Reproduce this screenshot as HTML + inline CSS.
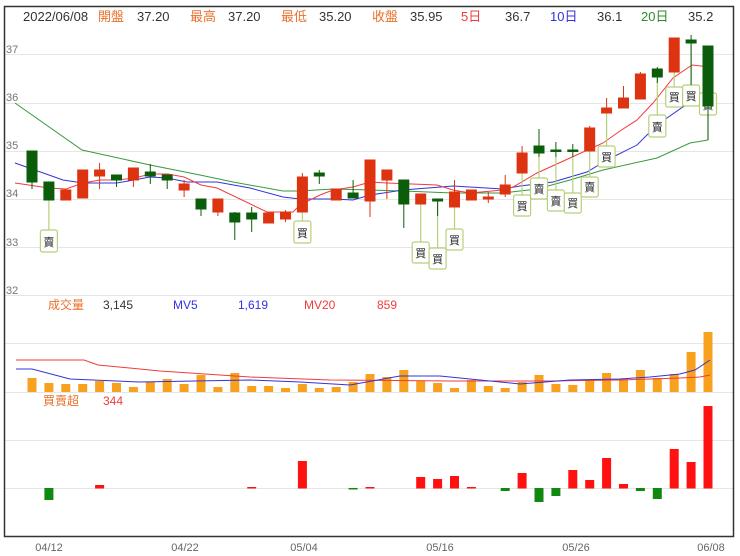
<!DOCTYPE html>
<html><head><meta charset="utf-8"><style>
html,body{margin:0;padding:0;background:#fff;}
svg{display:block;font-family:"Liberation Sans","Noto Sans CJK TC",sans-serif;}
</style></head><body>
<svg width="740" height="556" viewBox="0 0 740 556" xmlns="http://www.w3.org/2000/svg">
<rect x="0" y="0" width="740" height="556" fill="#fff"/>
<g stroke="#e6e6e6" stroke-width="1">
<line x1="5" y1="54.5" x2="733" y2="54.5"/><line x1="5" y1="103.5" x2="733" y2="103.5"/>
<line x1="5" y1="151.5" x2="733" y2="151.5"/><line x1="5" y1="199.5" x2="733" y2="199.5"/>
<line x1="5" y1="247.5" x2="733" y2="247.5"/><line x1="5" y1="295.5" x2="733" y2="295.5"/>
<line x1="5" y1="343.5" x2="733" y2="343.5"/><line x1="5" y1="392.5" x2="733" y2="392.5"/>
<line x1="5" y1="440.5" x2="733" y2="440.5"/><line x1="5" y1="488.5" x2="733" y2="488.5"/>
</g>
<rect x="4.5" y="6.5" width="729" height="530" fill="none" stroke="#333" stroke-width="1.5"/>
<g font-size="13">
<text x="23" y="21" fill="#333">2022/06/08</text>
<text x="98" y="21" fill="#e8702a">開盤</text><text x="137" y="21" fill="#333">37.20</text>
<text x="190" y="21" fill="#e8702a">最高</text><text x="228" y="21" fill="#333">37.20</text>
<text x="281" y="21" fill="#e8702a">最低</text><text x="319" y="21" fill="#333">35.20</text>
<text x="372" y="21" fill="#e8702a">收盤</text><text x="410" y="21" fill="#333">35.95</text>
<text x="461" y="21" fill="#f03c3c">5日</text><text x="505" y="21" fill="#333">36.7</text>
<text x="550" y="21" fill="#3333dd">10日</text><text x="597" y="21" fill="#333">36.1</text>
<text x="641" y="21" fill="#2e8b2e">20日</text><text x="688" y="21" fill="#333">35.2</text>
</g>
<g font-size="11" fill="#777">
<text x="6" y="53">37</text><text x="6" y="101">36</text><text x="6" y="149">35</text>
<text x="6" y="197">34</text><text x="6" y="246">33</text><text x="6" y="294">32</text>
</g>
<!-- MA lines -->
<polyline fill="none" stroke="#3a9a3a" stroke-width="1" points="15,103 82,150 150,165 200,175 233,182 283,191 300,191 333,189 370,190 403,191 453,193 503,193 537,189 570,180 603,170 657,158 690,143 708,140"/>
<polyline fill="none" stroke="#3333dd" stroke-width="1" points="15,163 63,180 83,183 117,183 150,177 167,178 187,182 217,182 250,188 283,197 300,199 333,199 353,200 370,195 403,190 453,186 503,189 520,186 553,182 587,172 607,160 637,145 657,125 690,102 708,98"/>
<polyline fill="none" stroke="#f03c3c" stroke-width="1" points="15,183 49,188 66,189 83,183 100,180 117,180 134,178 151,174 168,174 184,177 201,185 217,188 267,212 293,212 300,205 320,195 333,190 353,187 370,182 387,183 437,185 453,190 470,193 503,190 513,187 537,173 570,158 603,143 620,131 637,120 653,103 673,78 692,65 710,67"/>
<!-- markers -->
<g stroke="#b5d17a" stroke-width="1.2" fill="#fff">
<line x1="48.9" y1="200" x2="48.9" y2="230"/><rect x="40.4" y="230" width="17" height="22" rx="2"/>
<line x1="302.4" y1="212" x2="302.4" y2="221"/><rect x="293.9" y="221" width="17" height="22" rx="2"/>
<line x1="420.7" y1="204" x2="420.7" y2="242"/><rect x="412.2" y="242" width="17" height="21" rx="2"/>
<line x1="437.6" y1="201" x2="437.6" y2="248"/><rect x="429.1" y="248" width="17" height="21" rx="2"/>
<line x1="454.5" y1="207" x2="454.5" y2="229"/><rect x="446" y="229" width="17" height="21" rx="2"/>
<line x1="522.1" y1="173" x2="522.1" y2="195"/><rect x="513.6" y="195" width="17" height="21" rx="2"/>
<line x1="539" y1="157" x2="539" y2="178"/><rect x="530.5" y="178" width="17" height="21" rx="2"/>
<line x1="555.9" y1="157" x2="555.9" y2="190"/><rect x="547.4" y="190" width="17" height="21" rx="2"/>
<line x1="572.8" y1="157" x2="572.8" y2="193"/><rect x="564.3" y="193" width="17" height="20" rx="2"/>
<line x1="589.7" y1="151" x2="589.7" y2="177"/><rect x="581.2" y="177" width="17" height="20" rx="2"/>
<line x1="606.6" y1="113" x2="606.6" y2="146"/><rect x="598.1" y="146" width="17" height="21" rx="2"/>
<line x1="657.3" y1="77" x2="657.3" y2="115"/><rect x="648.8" y="115" width="17" height="22" rx="2"/>
<line x1="674.2" y1="72" x2="674.2" y2="87"/><rect x="665.7" y="87" width="17" height="20" rx="2"/>
<line x1="691.1" y1="43" x2="691.1" y2="85"/><rect x="682.6" y="85" width="17" height="21" rx="2"/>
<line x1="708" y1="106" x2="708" y2="140"/><rect x="699.5" y="93" width="17" height="22" rx="2"/>
</g>
<g font-size="11" fill="#222" text-anchor="middle">
<text x="48.9" y="246">賣</text><text x="302.4" y="237">買</text>
<text x="420.7" y="257">買</text><text x="437.6" y="263">買</text><text x="454.5" y="244">買</text>
<text x="522.1" y="210">買</text><text x="539" y="193">賣</text><text x="555.9" y="205">賣</text>
<text x="572.8" y="207">買</text><text x="589.7" y="191">賣</text><text x="606.6" y="161">買</text>
<text x="657.3" y="131">賣</text><text x="674.2" y="101">買</text><text x="691.1" y="100">買</text>
<text x="708" y="109">賣</text>
</g>
<!-- candles -->
<g stroke-width="1">
<g stroke="#0b5d0b" fill="#0b5d0b">
<line x1="32" y1="151" x2="32" y2="189"/><rect x="27" y="151" width="10" height="31"/>
<line x1="48.9" y1="182" x2="48.9" y2="200"/><rect x="43.9" y="182" width="10" height="18"/>
<line x1="116.5" y1="175" x2="116.5" y2="187"/><rect x="111.5" y="175" width="10" height="5"/>
<line x1="150.3" y1="164" x2="150.3" y2="184"/><rect x="145.3" y="172" width="10" height="4"/>
<line x1="167.2" y1="175" x2="167.2" y2="189"/><rect x="162.2" y="175" width="10" height="5"/>
<line x1="201" y1="199" x2="201" y2="216"/><rect x="196" y="199" width="10" height="10"/>
<line x1="234.8" y1="212" x2="234.8" y2="240"/><rect x="229.8" y="213" width="10" height="9"/>
<line x1="251.7" y1="207" x2="251.7" y2="232"/><rect x="246.7" y="213" width="10" height="6"/>
<line x1="319.3" y1="170" x2="319.3" y2="184"/><rect x="314.3" y="173" width="10" height="3"/>
<line x1="353.1" y1="180" x2="353.1" y2="198"/><rect x="348.1" y="193" width="10" height="5"/>
<line x1="403.8" y1="180" x2="403.8" y2="228"/><rect x="398.8" y="180" width="10" height="24"/>
<line x1="437.6" y1="199" x2="437.6" y2="216"/><rect x="432.6" y="199" width="10" height="2"/>
<line x1="539" y1="129" x2="539" y2="157"/><rect x="534" y="146" width="10" height="7"/>
<line x1="555.9" y1="142" x2="555.9" y2="157"/><rect x="550.9" y="150" width="10" height="1.5"/>
<line x1="572.8" y1="144" x2="572.8" y2="157"/><rect x="567.8" y="150" width="10" height="1.5"/>
<line x1="657.3" y1="67" x2="657.3" y2="83"/><rect x="652.3" y="69" width="10" height="8"/>
<line x1="691.1" y1="35" x2="691.1" y2="85"/><rect x="686.1" y="40" width="10" height="3"/>
<line x1="708" y1="46" x2="708" y2="140"/><rect x="703" y="46" width="10" height="60"/>
</g>
<g stroke="#dd3311" fill="#dd3311">
<rect x="60.8" y="190" width="10" height="10"/>
<rect x="77.7" y="170" width="10" height="28"/>
<line x1="99.6" y1="163" x2="99.6" y2="189"/><rect x="94.6" y="170" width="10" height="6"/>
<line x1="133.4" y1="168" x2="133.4" y2="187"/><rect x="128.4" y="168" width="10" height="12"/>
<line x1="184.1" y1="180" x2="184.1" y2="197"/><rect x="179.1" y="184" width="10" height="6"/>
<line x1="217.9" y1="199" x2="217.9" y2="216"/><rect x="212.9" y="199" width="10" height="13"/>
<rect x="263.6" y="213" width="10" height="10"/>
<line x1="285.5" y1="210" x2="285.5" y2="222"/><rect x="280.5" y="212" width="10" height="7"/>
<line x1="302.4" y1="173" x2="302.4" y2="212"/><rect x="297.4" y="177" width="10" height="35"/>
<rect x="331.2" y="189" width="10" height="11"/>
<line x1="370" y1="160" x2="370" y2="217"/><rect x="365" y="160" width="10" height="41"/>
<line x1="386.9" y1="170" x2="386.9" y2="199"/><rect x="381.9" y="170" width="10" height="10"/>
<rect x="415.7" y="194" width="10" height="10"/>
<line x1="454.5" y1="180" x2="454.5" y2="207"/><rect x="449.5" y="192" width="10" height="15"/>
<rect x="466.4" y="190" width="10" height="10"/>
<line x1="488.3" y1="192" x2="488.3" y2="203"/><rect x="483.3" y="197" width="10" height="2"/>
<line x1="505.2" y1="175" x2="505.2" y2="197"/><rect x="500.2" y="185" width="10" height="9"/>
<line x1="522.1" y1="146" x2="522.1" y2="173"/><rect x="517.1" y="153" width="10" height="20"/>
<line x1="589.7" y1="126" x2="589.7" y2="151"/><rect x="584.7" y="128" width="10" height="23"/>
<line x1="606.6" y1="98" x2="606.6" y2="113"/><rect x="601.6" y="108" width="10" height="5"/>
<line x1="623.5" y1="86" x2="623.5" y2="108"/><rect x="618.5" y="98" width="10" height="10"/>
<line x1="640.4" y1="72" x2="640.4" y2="99"/><rect x="635.4" y="74" width="10" height="25"/>
<rect x="669.2" y="38" width="10" height="34"/>
</g>
</g>
<!-- volume legend -->
<g font-size="12">
<text x="48" y="309" fill="#e8702a">成交量</text><text x="103" y="309" fill="#333">3,145</text>
<text x="173" y="309" fill="#3333dd">MV5</text><text x="238" y="309" fill="#3333dd">1,619</text>
<text x="304" y="309" fill="#f03c3c">MV20</text><text x="377" y="309" fill="#f03c3c">859</text>
<text x="43" y="405" fill="#e8702a">買賣超</text><text x="103" y="405" fill="#f03c3c">344</text>
</g>
<!-- volume bars -->
<g fill="#f8a11e">
<rect x="27.5" y="378" width="9" height="14"/><rect x="44.4" y="383" width="9" height="9"/>
<rect x="61.3" y="384" width="9" height="8"/><rect x="78.2" y="384" width="9" height="8"/>
<rect x="95.1" y="381" width="9" height="11"/><rect x="112" y="383" width="9" height="9"/>
<rect x="128.9" y="387" width="9" height="5"/><rect x="145.8" y="382" width="9" height="10"/>
<rect x="162.7" y="379" width="9" height="13"/><rect x="179.6" y="384" width="9" height="8"/>
<rect x="196.5" y="375" width="9" height="17"/><rect x="213.4" y="387" width="9" height="5"/>
<rect x="230.3" y="373" width="9" height="19"/><rect x="247.2" y="386" width="9" height="6"/>
<rect x="264.1" y="386" width="9" height="6"/><rect x="281" y="388" width="9" height="4"/>
<rect x="297.9" y="384" width="9" height="8"/><rect x="314.8" y="388" width="9" height="4"/>
<rect x="331.7" y="387" width="9" height="5"/><rect x="348.6" y="382" width="9" height="10"/>
<rect x="365.5" y="374" width="9" height="18"/><rect x="382.4" y="377" width="9" height="15"/>
<rect x="399.3" y="370" width="9" height="22"/><rect x="416.2" y="381" width="9" height="11"/>
<rect x="433.1" y="383" width="9" height="9"/><rect x="450" y="388" width="9" height="4"/>
<rect x="466.9" y="380" width="9" height="12"/><rect x="483.8" y="386" width="9" height="6"/>
<rect x="500.7" y="388" width="9" height="4"/><rect x="517.6" y="382" width="9" height="10"/>
<rect x="534.5" y="375" width="9" height="17"/><rect x="551.4" y="384" width="9" height="8"/>
<rect x="568.3" y="385" width="9" height="7"/><rect x="585.2" y="380" width="9" height="12"/>
<rect x="602.1" y="373" width="9" height="19"/><rect x="619" y="379" width="9" height="13"/>
<rect x="635.9" y="370" width="9" height="22"/><rect x="652.8" y="378" width="9" height="14"/>
<rect x="669.7" y="374" width="9" height="18"/><rect x="686.6" y="352" width="9" height="40"/>
<rect x="703.5" y="332" width="9" height="60"/>
</g>
<polyline fill="none" stroke="#f03c3c" stroke-width="1" points="16,360 84,360 98,365 160,371 250,377 330,380 450,381 550,381 620,380 680,378 700,377 710,375"/>
<polyline fill="none" stroke="#3333dd" stroke-width="1" points="16,369 32,369 70,379 140,382 250,380 300,382 350,385 400,376 440,376 480,380 520,384 570,380 620,379 650,377 680,374 695,370 710,360"/>
<!-- net buy -->
<g fill="#ff1111">
<rect x="95.1" y="485" width="9" height="3.5"/><rect x="247.2" y="487" width="9" height="1.5"/>
<rect x="297.9" y="461" width="9" height="27.5"/><rect x="365.5" y="487" width="9" height="1.5"/>
<rect x="416.2" y="477" width="9" height="11.5"/><rect x="433.1" y="479" width="9" height="9.5"/>
<rect x="450" y="476" width="9" height="12.5"/><rect x="466.9" y="487" width="9" height="1.5"/>
<rect x="517.6" y="473" width="9" height="15.5"/><rect x="568.3" y="470" width="9" height="18.5"/>
<rect x="585.2" y="480" width="9" height="8.5"/><rect x="602.1" y="458" width="9" height="30.5"/>
<rect x="619" y="484" width="9" height="4.5"/><rect x="669.7" y="449" width="9" height="39.5"/>
<rect x="686.6" y="462" width="9" height="26.5"/><rect x="703.5" y="406" width="9" height="82.5"/>
</g>
<g fill="#118811">
<rect x="44.4" y="488" width="9" height="12"/><rect x="348.6" y="488" width="9" height="1.5"/>
<rect x="500.7" y="488" width="9" height="3"/><rect x="534.5" y="488" width="9" height="14"/>
<rect x="551.4" y="488" width="9" height="8"/><rect x="635.9" y="488" width="9" height="3"/>
<rect x="652.8" y="488" width="9" height="11"/>
</g>
<g font-size="11" fill="#666" text-anchor="middle">
<text x="49" y="551">04/12</text><text x="185" y="551">04/22</text><text x="304" y="551">05/04</text>
<text x="440" y="551">05/16</text><text x="576" y="551">05/26</text><text x="711" y="551">06/08</text>
</g>
</svg>
</body></html>
